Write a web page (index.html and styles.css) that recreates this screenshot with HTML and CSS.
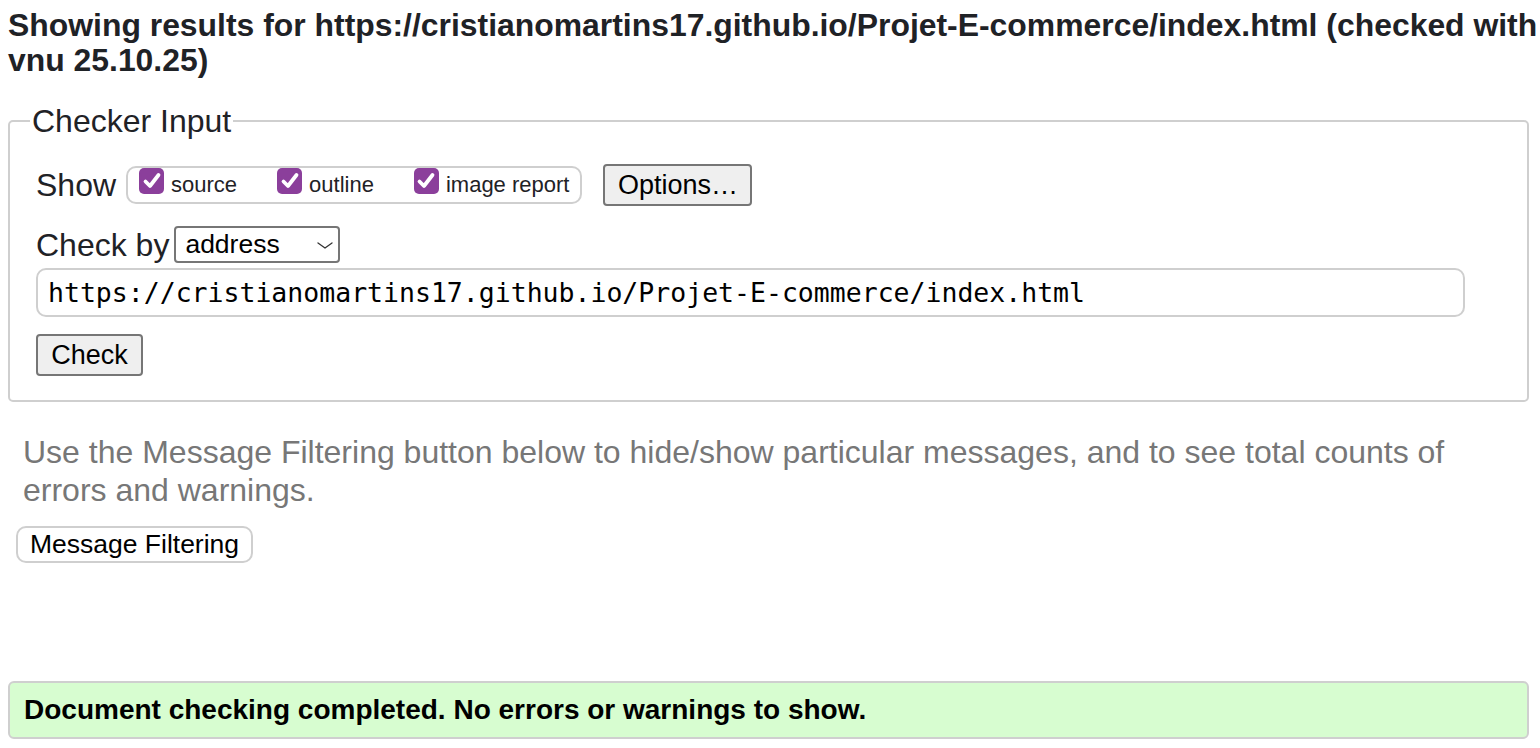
FILE: index.html
```html
<!DOCTYPE html>
<html lang="en">
<head>
<meta charset="utf-8">
<title>Showing results for https://cristianomartins17.github.io/Projet-E-commerce/index.html - Nu Html Checker</title>
<link rel="stylesheet" href="styles.css">
</head>
<body>
<h2 class="title">Showing results for https://cristianomartins17.github.io/Projet-E-commerce/index.html (checked with vnu 25.10.25)</h2>
<form class="checker">
  <fieldset class="box">
    <legend class="legend">Checker Input</legend>
    <div class="row show-row">
      <span class="label">Show</span>
      <span class="group">
        <span class="opt"><span class="cb"><svg viewBox="0 0 24 24" width="24" height="24"><path d="M5.5 12.5 L10 17 L18.5 6" fill="none" stroke="#fff" stroke-width="3.8" stroke-linecap="round" stroke-linejoin="round"/></svg></span><span class="opt-text">source</span></span>
        <span class="opt"><span class="cb"><svg viewBox="0 0 24 24" width="24" height="24"><path d="M5.5 12.5 L10 17 L18.5 6" fill="none" stroke="#fff" stroke-width="3.8" stroke-linecap="round" stroke-linejoin="round"/></svg></span><span class="opt-text">outline</span></span>
        <span class="opt"><span class="cb"><svg viewBox="0 0 24 24" width="24" height="24"><path d="M5.5 12.5 L10 17 L18.5 6" fill="none" stroke="#fff" stroke-width="3.8" stroke-linecap="round" stroke-linejoin="round"/></svg></span><span class="opt-text">image report</span></span>
      </span>
      <button type="button" class="btn options">Options…</button>
    </div>
    <div class="row by-row">
      <span class="label">Check by</span>
      <span class="select"><span class="select-text">address</span><svg class="chev" viewBox="0 0 16 7" width="16" height="7"><path d="M1 1 L8 6 L15 1" fill="none" stroke="#333" stroke-width="1.3" stroke-linecap="round" stroke-linejoin="round"/></svg></span>
    </div>
    <div class="url">https://cristianomartins17.github.io/Projet-E-commerce/index.html</div>
    <div class="row">
      <button type="button" class="btn check">Check</button>
    </div>
  </fieldset>
</form>
<p class="note">Use the Message Filtering button below to hide/show particular messages, and to see total counts of errors and warnings.</p>
<button type="button" class="filter">Message Filtering</button>
<div class="spacer"></div>
<div class="success">Document checking completed. No errors or warnings to show.</div>
</body>
</html>
```
FILE: styles.css
```css
html, body {
  margin: 0;
  padding: 0;
  background: #fff;
}
body {
  padding: 8px 11px 0 8px;
  font-family: "Liberation Sans", Arial, sans-serif;
  color: #1f2226;
  overflow: hidden;
}
.title {
  margin: 0 -11px 0 0;
  font-size: 31.9px;
  line-height: 35px;
  font-weight: bold;
  color: #1f2226;
}
.checker {
  margin-top: 25px;
}
.box {
  margin: 0;
  border: 2px solid #cfcfcf;
  border-radius: 5px;
  padding: 4px 22px 24px 26px;
}
.legend {
  padding: 0 2px;
  margin-left: -6px;
  font-size: 32px;
  line-height: 36px;
  color: #1f2226;
}
.row {
  display: flex;
  align-items: center;
}
.label {
  font-size: 32px;
  line-height: 36px;
  color: #1f2226;
}
.show-row {
  margin-top: 21px;
  height: 42px;
}
.show-row .label {
  margin-right: 10px;
}
.group {
  display: flex;
  align-items: center;
  height: 38px;
  border: 2px solid #cfcfcf;
  border-radius: 10px;
  padding: 0 11px;
  box-sizing: border-box;
}
.opt {
  display: flex;
  align-items: center;
  margin-right: 40px;
}
.opt:last-child {
  margin-right: 0;
}
.cb {
  width: 25px;
  height: 26px;
  border-radius: 5px;
  background: #8b3f9b;
  display: flex;
  align-items: center;
  justify-content: center;
  margin-right: 7px;
  margin-top: -9px;
}
.opt-text {
  font-size: 22px;
  color: #1f2226;
}
.btn {
  font-family: "Liberation Sans", Arial, sans-serif;
  background: #efefef;
  border: 2px solid #767676;
  border-radius: 4px;
  color: #000;
  padding: 0;
}
.options {
  margin-left: 21px;
  width: 149px;
  height: 42px;
  font-size: 27px;
}
.by-row {
  margin-top: 20px;
  height: 37px;
}
.by-row .label {
  margin-right: 5px;
}
.select {
  display: flex;
  align-items: center;
  justify-content: space-between;
  box-sizing: border-box;
  width: 166px;
  height: 37px;
  border: 2px solid #767676;
  border-radius: 4px;
  padding: 0 5px 0 9px;
}
.select-text {
  font-size: 26.5px;
  color: #000;
}
.chev {
  margin-top: 1px;
}
.url {
  margin-top: 5px;
  box-sizing: border-box;
  width: 1429px;
  height: 49px;
  border: 2px solid #cfcfcf;
  border-radius: 10px;
  padding: 0 10px;
  display: flex;
  align-items: center;
  font-family: "DejaVu Sans Mono", "Liberation Mono", monospace;
  font-size: 26.5px;
  color: #000;
}
.check {
  margin-top: 17px;
  width: 107px;
  height: 42px;
  font-size: 27px;
}
.note {
  margin: 31px 0 0 15px;
  font-size: 32px;
  line-height: 38px;
  color: #777;
}
.filter {
  display: block;
  margin: 17px 0 0 8px;
  width: 237px;
  height: 37px;
  background: #fff;
  border: 2px solid #cfcfcf;
  border-radius: 10px;
  font-family: "Liberation Sans", Arial, sans-serif;
  font-size: 26.5px;
  color: #000;
  padding: 0;
}
.spacer {
  height: 118px;
}
.success {
  box-sizing: border-box;
  height: 58px;
  background: #d7fdd0;
  border: 2px solid #cfcfcf;
  border-radius: 6px;
  padding: 0 14px;
  display: flex;
  align-items: center;
  font-weight: bold;
  font-size: 28px;
  color: #000;
}
```
